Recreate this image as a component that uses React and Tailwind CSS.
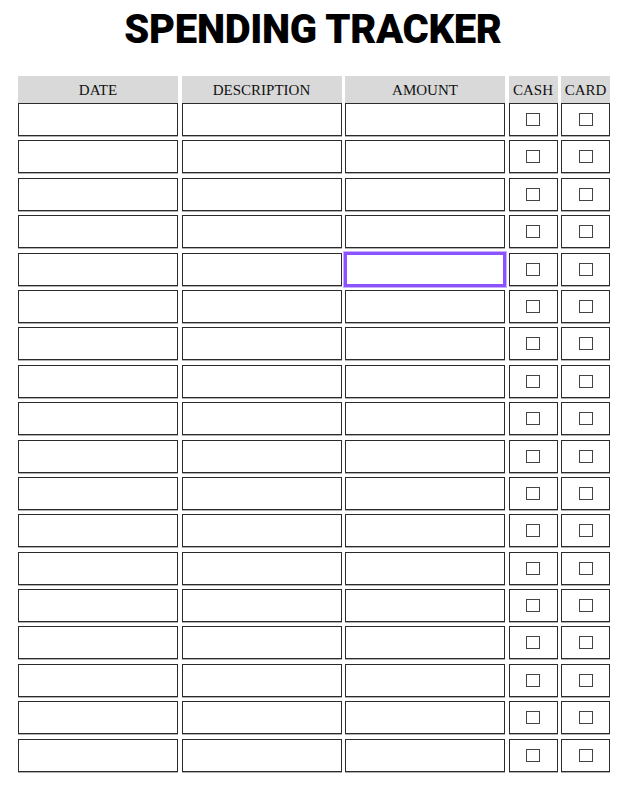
import React from 'react';

const COLUMNS = ['DATE', 'DESCRIPTION', 'AMOUNT', 'CASH', 'CARD'];
const ROWS = Array.from({ length: 18 }, (_, i) => i);

function TextCell({ focused }) {
    if (focused) {
        // campo ativo com destaque roxo
        return <div className="h-[35px] -mx-[1px] -my-[1px] border-[3px] border-[#8c52ff] bg-white shadow-[0_0_0_1px_#c9b0ff]" />;
    }
    return <div className="h-[33px] border border-[#2b2b2b] bg-white shadow-[0_1px_0_#b0b0b0]" />;
}

function CheckCell() {
    return (
        <div className="h-[33px] border border-[#2b2b2b] bg-white shadow-[0_1px_0_#b0b0b0] flex items-center justify-center">
            <div className="w-[14px] h-[13px] border border-[#444]" />
        </div>
    );
}

export default function App() {
    return (
        <div className="w-[626px] h-[794px] bg-white">
            <h1
                className="pt-[10px] text-center text-[40px] leading-[40px] font-black tracking-[-0.3px] text-black"
                style={{ fontFamily: 'Roboto, "Liberation Sans", sans-serif' }}
            >
                SPENDING TRACKER
            </h1>

            <div
                className="mt-[26px] ml-[18px] grid grid-cols-[160px_160px_160px_49px_49px] gap-x-[3.5px]"
                style={{ fontFamily: '"Liberation Serif", serif' }}
            >
                {COLUMNS.map((col) => (
                    <div key={col} className="h-[27px] bg-[#d9d9d9] flex items-center justify-center text-[15px] text-[#111] pt-[2px]">
                        {col}
                    </div>
                ))}
            </div>

            <div className="ml-[18px] grid grid-cols-[160px_160px_160px_49px_49px] gap-x-[3.5px] gap-y-[4.4px]">
                {ROWS.map((r) => (
                    <React.Fragment key={r}>
                        <TextCell />
                        <TextCell />
                        <TextCell focused={r === 4} />
                        <CheckCell />
                        <CheckCell />
                    </React.Fragment>
                ))}
            </div>
        </div>
    );
}
